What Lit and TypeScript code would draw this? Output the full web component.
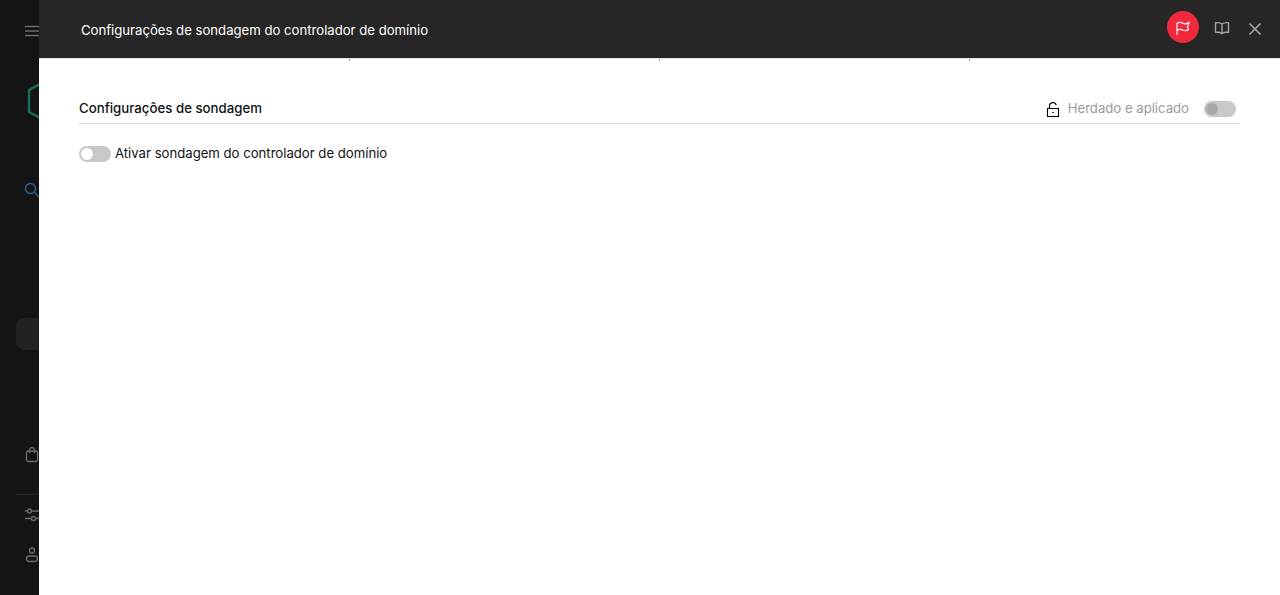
import { LitElement, html, css } from "lit";
import { customElement } from "lit/decorators.js";

@customElement("app-root")
export class AppRoot extends LitElement {
  static styles = css`
    :host { display: block; width: 1280px; height: 595px; overflow: hidden; font-family: "Inter", "Liberation Sans", sans-serif; font-size: 13.15px; }
    .page { display: flex; height: 595px; }
    .rail { width: 39px; flex: none; background: #141414; overflow: hidden; display: flex; flex-direction: column; align-items: flex-start; }
    .rail svg { display: block; flex: none; fill: none; stroke: #6b6b6b; stroke-width: 1.3; }
    .i-menu { margin: 24px 0 0 24px; }
    .i-hex { margin: 40px 0 0 26px; stroke: #13705f !important; stroke-width: 2.4 !important; stroke-linejoin: round; }
    .i-search { margin: 58px 0 0 24px; stroke: #2f5d94 !important; stroke-width: 1.5 !important; }
    .pill { margin: 120px 0 0 16px; width: 40px; height: 32px; flex: none; border-radius: 8px; background: #222; }
    .i-bag { margin: 97px 0 0 24px; }
    .rule { margin: 31px 0 0 16px; width: 40px; height: 1px; flex: none; background: #2b2b2b; }
    .i-sliders { margin: 13px 0 0 24px; }
    .i-user { margin: 25px 0 0 24px; }
    .drawer { flex: 1; display: flex; flex-direction: column; background: #fff; min-width: 0; }
    .head { height: 59px; flex: none; box-sizing: border-box; border-bottom: 1px solid #e0e0e0; background: #262626; display: flex; align-items: center; padding: 0 17px 0 42px; color: #fff; }
    .title { flex: 1; margin-top: 2px; }
    .flag { width: 32px; height: 32px; border-radius: 50%; background: #f02a3c; display: flex; align-items: center; justify-content: center; margin-bottom: 4px; }
    .head svg { display: block; fill: none; }
    .book { margin-left: 15px; margin-bottom: 2px; }
    .close { margin-left: 17px; }
    .ticks { height: 2px; display: flex; gap: 309px; padding-left: 310px; }
    .ticks i { width: 1px; height: 2px; background: #9a9a9a; }
    .body { padding: 33px 40px 0; }
    .section { display: flex; align-items: center; height: 30px; border-bottom: 1px solid #d9d9d9; color: #111; box-sizing: border-box; }
    .section .name { flex: 1; font-weight: 450; font-size: 13.25px; margin-bottom: 2px; }
    .lock { margin: 3px 8px 0 0; display: block; }
    .inherit { color: #9a9a9a; margin: 0 15px 2px 0; }
    .toggle { width: 32px; height: 16px; border-radius: 8px; background: #c8c8c8; display: flex; align-items: center; padding: 0 2px; box-sizing: border-box; flex: none; }
    .knob { width: 12px; height: 12px; border-radius: 50%; background: #fff; }
    .toggle.dis { margin-right: 4px; }
    .toggle.dis .knob { background: #a8a8a8; }
    .row { display: flex; align-items: center; gap: 4px; margin-top: 21px; color: #111; }
    .row .label { margin-bottom: 2px; }
  `;

  render() {
    return html`<div class="page">
      <nav class="rail">
        <svg class="i-menu" width="16" height="14" viewBox="0 0 16 14"><path d="M1 2.500h15M1 7h15M1 11.500h15"/></svg>
        <svg class="i-hex" width="30" height="46" viewBox="0 0 30 46"><path d="M14 6 3 12v22l11 6"/></svg>
        <svg class="i-search" width="16" height="16" viewBox="0 0 16 16"><circle cx="6.500" cy="6.500" r="5"/><path d="m10 10 5 5"/></svg>
        <div class="pill"></div>
        <svg class="i-bag" width="16" height="16" viewBox="0 0 16 16"><rect x="2.500" y="4" width="11" height="10.500" rx="1.500"/><path d="M5.500 6V3a2.500 2.500 0 0 1 5 0v3"/></svg>
        <div class="rule"></div>
        <svg class="i-sliders" width="16" height="14" viewBox="0 0 16 14"><circle cx="5.500" cy="3" r="2"/><circle cx="9.500" cy="10.500" r="2"/><path d="M1 3h2.500M7.500 3H16M1 10.500h6.500M11.500 10.500H16"/></svg>
        <svg class="i-user" width="16" height="16" viewBox="0 0 16 16"><circle cx="8" cy="3.500" r="2.500"/><rect x="2.500" y="9" width="11" height="5.500" rx="2.700"/></svg>
      </nav>
      <div class="drawer">
        <header class="head">
          <span class="title">Configurações de sondagem do controlador de domínio</span>
          <span class="flag">
            <svg width="16" height="16" viewBox="0 0 16 16" stroke="#fff" stroke-width="1.100" stroke-linejoin="round"><path d="M2 16V4.500C4 3 6 3 8 4.200 10 5.300 12 5 14.200 3.200L12.500 7.500 13.500 10.500C11.500 12 9.500 12 7.500 11 5.500 10 3.500 10.300 2 11.500"/></svg>
          </span>
          <svg class="book" width="16" height="14" viewBox="0 0 16 14" stroke="#a3a3a3" stroke-width="1.400" stroke-linejoin="round"><path d="M8 3C6.500 1.700 4 1.500 1.500 1.700v9.600C4 11 6.500 11.300 8 12.500c1.500-1.200 4-1.500 6.500-1.200V1.700C12 1.500 9.500 1.700 8 3ZM8 3v9.500"/></svg>
          <svg class="close" width="16" height="16" viewBox="0 0 16 16" stroke="#a3a3a3" stroke-width="1.700"><path d="m2.500 2.500 11 11M13.500 2.500l-11 11"/></svg>
        </header>
        <div class="ticks"><i></i><i></i><i></i></div>
        <main class="body">
          <div class="section">
            <span class="name">Configurações de sondagem</span>
            <svg class="lock" width="14" height="16" viewBox="0 0 14 16" fill="none" stroke="#000" stroke-width="1.100"><rect x="1.500" y="6.500" width="11" height="8"/><path d="M3.500 6.500V4a3.400 3.400 0 0 1 6.700-.8M6.200 10.500h1.600"/></svg>
            <span class="inherit">Herdado e aplicado</span>
            <span class="toggle dis"><span class="knob"></span></span>
          </div>
          <div class="row">
            <span class="toggle"><span class="knob"></span></span>
            <span class="label">Ativar sondagem do controlador de domínio</span>
          </div>
        </main>
      </div>
    </div>`;
  }
}
